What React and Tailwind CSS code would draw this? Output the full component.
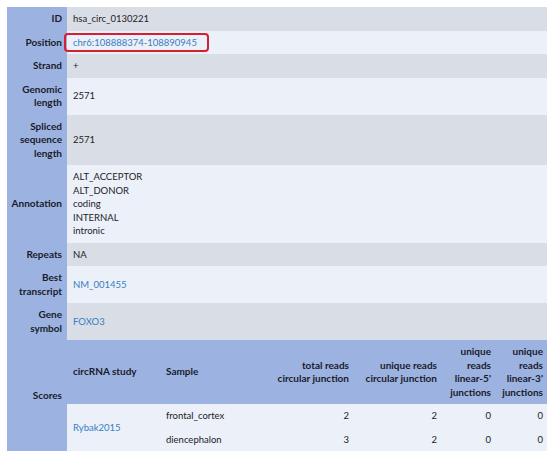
import React from "react";

const LBL = "bg-[#9cb3e1] text-right align-middle font-bold text-[10px] leading-[13.5px] text-[#1a1a2a] pr-[5px] pl-[2px] py-[5px] w-[60px]";
const VAL = "align-middle text-[9.5px] leading-[13.5px] text-[#222] pl-[6px] pr-[4px] py-[5px]";
const GRAY = "bg-[#d9dee6]";
const LIGHT = "bg-[#ebf0f9]";
const LINK = "text-[#3a7dbf]";

function Row({ label, children, bg }) {
  return (
    <tr>
      <th className={LBL}>{label}</th>
      <td className={`${VAL} ${bg}`}>{children}</td>
    </tr>
  );
}

export default function App() {
  const hdr = "align-middle font-bold text-[10px] leading-[13.5px] text-[#1a1a2a] py-[5px] px-[5px]";
  const num = "text-right text-[9.5px] leading-[13.5px] text-[#222] py-[5px] pr-[4px]";
  return (
    <div className="w-[553px] h-[467px] bg-white p-[7px]" style={{ fontFamily: "Lato, 'Open Sans', sans-serif" }}>
      <table className="w-[540px] border-collapse table-fixed">
        <colgroup>
          <col className="w-[60px]" />
          <col />
        </colgroup>
        <tbody>
          <Row label="ID" bg={GRAY}>hsa_circ_0130221</Row>
          <Row label="Position" bg={LIGHT}>
            <span className="relative">
              <span className={LINK}>chr6:108888374-108890945</span>
              <span className="absolute left-[-9px] right-[-12px] top-[-4px] bottom-[-4px] border-2 border-[#d42030] rounded-[4px]"></span>
            </span>
          </Row>
          <Row label="Strand" bg={GRAY}>+</Row>
          <Row label={<>Genomic<br />length</>} bg={LIGHT}>2571</Row>
          <Row label={<>Spliced<br />sequence<br />length</>} bg={GRAY}>2571</Row>
          <Row label="Annotation" bg={LIGHT}>
            ALT_ACCEPTOR<br />ALT_DONOR<br />coding<br />INTERNAL<br />intronic
          </Row>
          <Row label="Repeats" bg={GRAY}>NA</Row>
          <Row label={<>Best<br />transcript</>} bg={LIGHT}>
            <span className={LINK}>NM_001455</span>
          </Row>
          <Row label={<>Gene<br />symbol</>} bg={GRAY}>
            <span className={LINK}>FOXO3</span>
          </Row>
          <tr>
            <th className={LBL}>Scores</th>
            <td className="p-0 align-top">
              <table className="w-[480px] border-collapse table-fixed">
                <colgroup>
                  <col className="w-[93px]" />
                  <col className="w-[100px]" />
                  <col className="w-[93px]" />
                  <col className="w-[88px]" />
                  <col className="w-[54px]" />
                  <col className="w-[52px]" />
                </colgroup>
                <thead>
                  <tr className="bg-[#9cb3e1] h-[64px]">
                    <th className={`${hdr} text-left pl-[6px]`}>circRNA study</th>
                    <th className={`${hdr} text-left pl-[6px]`}>Sample</th>
                    <th className={`${hdr} text-right pr-[4px] whitespace-nowrap`}>total reads<br />circular junction</th>
                    <th className={`${hdr} text-right pr-[4px] whitespace-nowrap`}>unique reads<br />circular junction</th>
                    <th className={`${hdr} text-right pr-[4px] pl-[2px]`}>unique<br />reads<br />linear-5'<br />junctions</th>
                    <th className={`${hdr} text-right pr-[4px] pl-[2px]`}>unique<br />reads<br />linear-3'<br />junctions</th>
                  </tr>
                </thead>
                <tbody className="bg-[#ebf0f9]">
                  <tr className="h-[23px]">
                    <td rowSpan={2} className={`align-middle text-[9.5px] leading-[13.5px] pl-[6px] ${LINK}`}>Rybak2015</td>
                    <td className="text-[9.5px] leading-[13.5px] text-[#222] pl-[6px] py-[5px]">frontal_cortex</td>
                    <td className={num}>2</td>
                    <td className={num}>2</td>
                    <td className={num}>0</td>
                    <td className={num}>0</td>
                  </tr>
                  <tr className="h-[23px]">
                    <td className="text-[9.5px] leading-[13.5px] text-[#222] pl-[6px] py-[5px]">diencephalon</td>
                    <td className={num}>3</td>
                    <td className={num}>2</td>
                    <td className={num}>0</td>
                    <td className={num}>0</td>
                  </tr>
                </tbody>
              </table>
            </td>
          </tr>
        </tbody>
      </table>
    </div>
  );
}
